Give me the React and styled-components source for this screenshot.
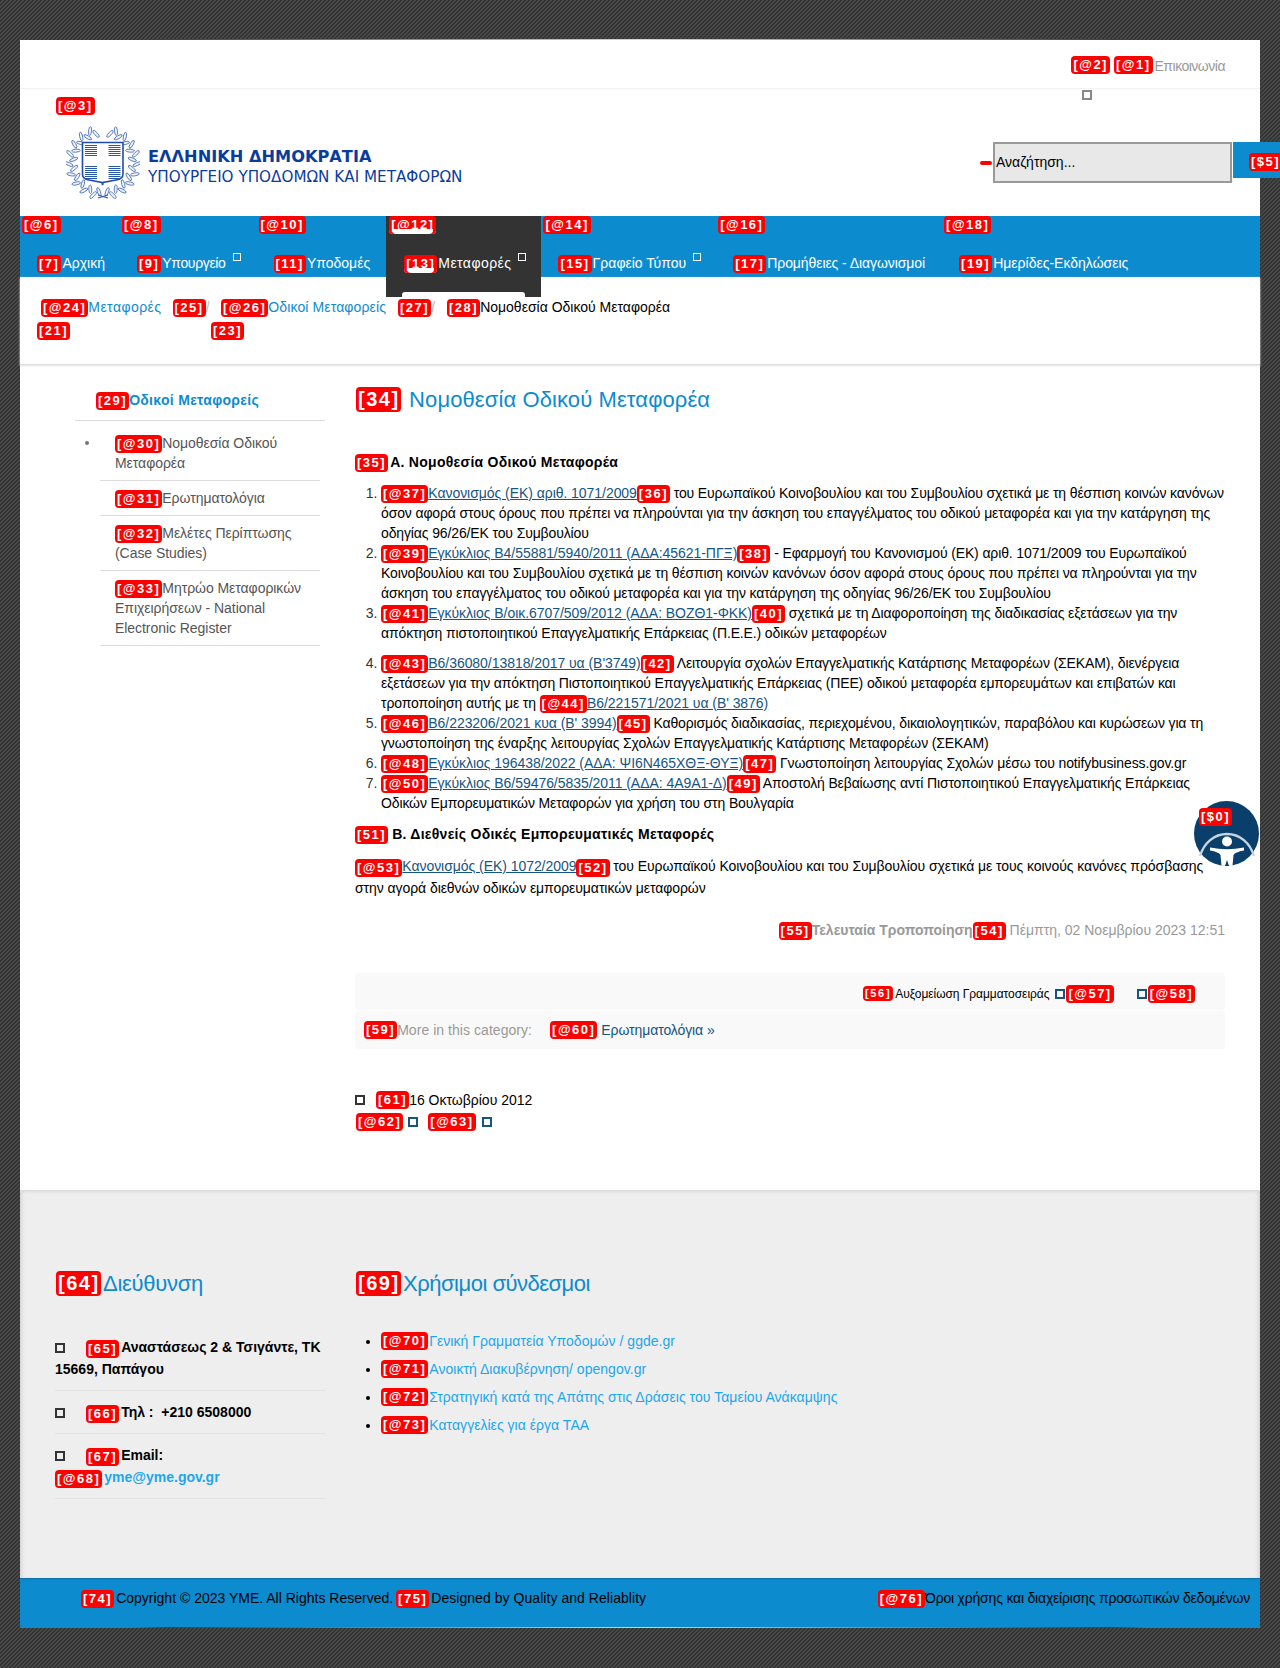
import React from "react";
import styled, { createGlobalStyle, css } from "styled-components";

const FONT = `"Liberation Sans", Arial, sans-serif`;

const Global = createGlobalStyle`
  html, body { margin: 0; padding: 0; }
  body {
    font-family: ${FONT};
    font-size: 14px;
    line-height: 20px;
    color: #000;
    overflow-x: hidden;
    background-color: #3e3e3e;
    background-image: linear-gradient(135deg, #343434 25%, #484848 25%, #484848 50%, #343434 50%, #343434 75%, #484848 75%);
    background-size: 4px 4px;
  }
`;

const Wrapper = styled.div`
  position: relative;
  width: 1240px;
  margin: 40px 20px;
  background: #fff;
  &::before, &::after {
    content: "";
    position: absolute;
    left: 0;
    right: 0;
    height: 1px;
    background: linear-gradient(90deg, transparent 9%, #0d4c86 12%, #cfd6da 50%, #0d4c86 88%, transparent 91%);
  }
  &::before { top: -1px; }
  &::after { bottom: 0; }
`;

const Tag = styled.span`
  position: relative;
  display: inline-block;
  flex: none;
  height: 18px;
  padding: 0 2px;
  border-radius: 4px;
  background: #f00;
  color: #fff;
  font: bold 13px/18px ${FONT};
  letter-spacing: 1.5px;
  vertical-align: bottom;
  text-decoration: none;
  white-space: nowrap;
  ${(p) => p.$size === "large" && css`
    height: 25px;
    padding: 0 1.5px 0 2px;
    font-size: 20px;
    line-height: 25px;
  `}
  ${(p) => p.$size === "small" && css`
    height: 15px;
    font-size: 11px;
    line-height: 15px;
    letter-spacing: 1.7px;
  `}
  ${(p) => p.$patched && css`
    background: linear-gradient(#f00 0 72%, #fff 72% 100%);
    box-shadow: inset 3px 0 #f00, inset -3px 0 #f00;
  `}
`;

const Tofu = styled.span`
  display: inline-block;
  flex: none;
  box-sizing: border-box;
  width: ${(p) => p.$w || 10}px;
  height: ${(p) => p.$w || 10}px;
  border: ${(p) => p.$b || 2}px solid ${(p) => p.$color || "#333"};
`;

/* top bar */
const TopBar = styled.div`
  box-sizing: border-box;
  height: 49px;
  padding: 16px 35px 0 0;
  display: flex;
  justify-content: flex-end;
  gap: 4px;
  border-bottom: 1px solid #f1f1f1;
`;
const TopLink = styled.a`
  margin-left: -2px;
  color: #999;
  letter-spacing: -0.5px;
`;

/* header */
const HeaderRow = styled.header`
  height: 127px;
  display: flex;
  justify-content: space-between;
`;
const Brand = styled.div`
  padding: 8px 0 0 36px;
  display: flex;
  flex-direction: column;
  align-items: flex-start;
`;
const Logo = styled.div`
  margin: 10px 0 0 10px;
  display: flex;
  gap: 8px;
`;
const LogoText = styled.div`
  padding-top: 21px;
  color: #0b3c9c;
  font-family: "DejaVu Sans", sans-serif;
`;
const LogoTitle = styled.div`
  font-size: 16.2px;
  line-height: 21px;
  font-weight: bold;
  white-space: nowrap;
`;
const LogoSub = styled.div`
  font-size: 15.2px;
  line-height: 20px;
  white-space: nowrap;
`;
const HeaderRight = styled.div`
  width: 300px;
  margin-right: -20px;
  display: flex;
  flex-direction: column;
  align-items: flex-start;
`;
const TofuHolder = styled.div`
  height: 10px;
  margin: 1px 0 0 102px;
  display: flex;
`;
const SearchForm = styled.form`
  margin-top: 42px;
  display: flex;
  align-items: flex-start;
`;
const SearchDash = styled.span`
  width: 12px;
  height: 4px;
  margin: 19px 1px 0 0;
  border-radius: 2px;
  background: #f00;
`;
const SearchBox = styled.div`
  box-sizing: border-box;
  width: 239px;
  height: 41px;
  padding-left: 1px;
  border: 2px solid #999;
  background: #e8e8e8;
  color: #000;
  line-height: 37px;
`;
const SearchButton = styled.div`
  box-sizing: border-box;
  width: 47px;
  height: 36px;
  margin-left: 1px;
  padding: 9px 0 0 16px;
  background: #0d8bcf;
  overflow: hidden;
  white-space: nowrap;
`;

/* nav */
const NavBar = styled.nav`
  height: 61px;
  display: flex;
  background: #0d8bcf;
`;
const NavItem = styled.div`
  height: ${(p) => (p.$active ? 81 : 61)}px;
  position: relative;
  display: flex;
  flex-direction: column;
  align-items: flex-start;
  padding: 0 ${(p) => p.$pad}px 0 ${(p) => (p.$active ? 3 : 2)}px;
  ${(p) => p.$active && css`
    background: #333;
    &::after {
      content: "";
      position: absolute;
      left: 16px;
      right: 16px;
      bottom: 0;
      height: 5px;
      border-radius: 3px 3px 0 0;
      background: #fff;
    }
  `}
`;
const NavLink = styled.a`
  margin: 19px 0 0 15px;
  height: 20px;
  display: flex;
  align-items: flex-end;
  color: #fff;
  white-space: nowrap;
`;
const NavLabel = styled.span`
  margin-left: 1px;
  line-height: 20px;
  letter-spacing: ${(p) => p.$ls || 0}px;
`;
const NavTofu = styled(Tofu)`
  align-self: flex-start;
  margin-left: 7px;
`;

/* breadcrumb */
const Crumbs = styled.div`
  box-sizing: border-box;
  height: 88px;
  padding: 20px 0 0 17px;
  display: flex;
  border-bottom: 1px solid #ddd;
  box-shadow: 0 1px 2px #e4e4e4;
`;
const CrumbGroup = styled.div`
  width: ${(p) => p.$w}px;
  flex: none;
`;
const CrumbRow = styled.div`
  height: 23px;
  padding-left: ${(p) => p.$indent || 0}px;
  white-space: nowrap;
`;
const CrumbLink = styled.a`
  color: #0d8bcf;
  letter-spacing: ${(p) => p.$ls || 0}px;
`;
const CrumbSep = styled.span`
  margin-left: ${(p) => p.$gap}px;
  color: #bbb;
`;

/* content */
const Content = styled.div`
  display: flex;
  height: 825px;
`;
const Side = styled.aside`
  width: 250px;
  margin-left: 55px;
  padding-top: 25px;
`;
const SideHead = styled.div`
  padding: 0 0 10px 21px;
  border-bottom: 1px solid #ddd;
  color: #0d8bcf;
  font-weight: bold;
  letter-spacing: 0.3px;
`;
const SideList = styled.ul`
  list-style: none;
  margin: 5px 5px 0 25px;
  padding: 0;
`;
const SideItem = styled.li`
  position: relative;
  padding: 7px 0 7px 15px;
  border-bottom: 1px solid #ddd;
  color: #555;
  ${(p) => p.$first && css`
    &::before {
      content: "";
      position: absolute;
      left: -15px;
      top: 15px;
      width: 4px;
      height: 4px;
      border-radius: 50%;
      background: #777;
    }
  `}
`;
const SideLink = styled.a`
  color: #555;
  letter-spacing: -0.05px;
`;
const Article = styled.main`
  width: 870px;
  margin-left: 30px;
  padding-top: 22px;
`;
const Title = styled.h1`
  margin: 0;
  padding-left: 1px;
  display: flex;
  gap: 8px;
  font-size: 22px;
  font-weight: normal;
  line-height: 25px;
  letter-spacing: 0.1px;
  color: #0d8bcf;
`;
const SubHead = styled.h3`
  margin: ${(p) => p.$top}px 0 0;
  font-size: 14px;
  line-height: 20px;
  font-weight: bold;
  letter-spacing: 0.28px;
  & > span { margin-right: ${(p) => p.$gap || 2}px; }
`;
const Numbered = styled.ol`
  margin: 11px 0 0;
  padding: 0 0 0 26px;
  letter-spacing: -0.13px;
`;
const NumItem = styled.li`
  margin-top: ${(p) => p.$top || 0}px;
  white-space: pre-line;
  &::marker { color: #333; }
`;
const DocLink = styled.a`
  color: #15557f;
  text-decoration: underline;
  letter-spacing: -0.05px;
`;
const Para = styled.p`
  margin: 11px 0 0;
  line-height: 22px;
  letter-spacing: -0.07px;
`;
const Modified = styled.div`
  margin-top: 21px;
  text-align: right;
  color: #999;
`;
const ModLabel = styled.strong`
  font-weight: bold;
  color: #999;
`;
const Strip = styled.div`
  box-sizing: border-box;
  height: ${(p) => p.$h}px;
  margin-top: ${(p) => p.$top}px;
  border-radius: 4px;
  background: #f9f9f9;
  display: flex;
  align-items: center;
  white-space: nowrap;
`;
const FontTools = styled(Strip)`
  justify-content: flex-end;
  padding: 4px 30px 0 0;
  font-size: 12px;
`;
const ToolTofu = styled(Tofu)`
  margin: 0 1px 0 ${(p) => p.$left}px;
`;
const SmallTagGap = styled.span`
  margin-left: 2px;
  letter-spacing: -0.05px;
`;
const PagerStrip = styled(Strip)`
  padding-left: 9px;
  color: #999;
  letter-spacing: 0.05px;
`;
const PagerTag = styled(Tag)`
  margin-left: 18px;
`;
const PagerLink = styled.a`
  margin-left: 4px;
  color: #15557f;
  letter-spacing: -0.1px;
`;
const MetaRow = styled.div`
  height: 20px;
  margin-top: ${(p) => p.$top}px;
  display: flex;
  align-items: center;
  white-space: nowrap;
`;
const MetaTag = styled(Tag)`
  margin-left: ${(p) => p.$left}px;
`;
const MetaTofu = styled(Tofu)`
  margin-left: ${(p) => p.$left}px;
`;

/* footer */
const FooterMain = styled.footer`
  box-sizing: border-box;
  height: 388px;
  padding: 81px 0 0 35px;
  display: flex;
  gap: 30px;
  background: #eee;
  box-shadow: inset 0 3px 3px -1px #dadada, inset 4px 0 4px -3px #ccc, inset -4px 0 4px -3px #ccc;
`;
const FooterCol = styled.section`
  width: ${(p) => p.$w}px;
`;
const FooterHead = styled.h2`
  margin: 0;
  display: flex;
  gap: 2px;
  padding-left: 1px;
  font-size: 22px;
  font-weight: normal;
  line-height: 25px;
  letter-spacing: ${(p) => p.$ls}px;
  color: #0d8bcf;
`;
const Contacts = styled.div`
  margin-top: 30px;
  font-weight: bold;
  line-height: 22px;
`;
const Contact = styled.div`
  padding: 10px 0;
  border-bottom: 1px solid #e2e2e2;
`;
const ContactTofu = styled(Tofu)`
  margin-right: 21px;
  vertical-align: -1px;
`;
const ContactText = styled.span`
  margin-left: 2px;
`;
const MailLink = styled.a`
  margin-left: 2px;
  color: #1ca7ec;
`;
const LinkList = styled.ul`
  margin: 31px 0 0;
  padding: 0 0 0 26px;
  line-height: 28px;
`;
const LinkItem = styled.li`
  & > span { vertical-align: 1px; }
`;
const FootLink = styled.a`
  margin-left: 1px;
  color: #1ca7ec;
  letter-spacing: 0.03px;
`;
const BottomBar = styled.div`
  box-sizing: border-box;
  height: 50px;
  padding: 10px 10px 0 61px;
  display: flex;
  justify-content: space-between;
  background: #0d8bcf;
  box-shadow: inset 0 2px 2px -1px #0a6ea5;
  color: #000;
  white-space: nowrap;
`;
const BarTag = styled(Tag)`
  margin: 0 2px 0 ${(p) => p.$left || 0}px;
`;
const BarText = styled.span`
  letter-spacing: ${(p) => p.$ls || 0}px;
`;

/* accessibility */
const A11yButton = styled.div`
  position: absolute;
  left: 1174px;
  top: 761px;
  width: 65px;
  height: 65px;
`;
const A11yTag = styled(Tag)`
  position: absolute;
  left: 5px;
  top: 7px;
`;

const Emblem = () => {
  const leaves = [];
  const n = 19;
  for (let side = -1; side <= 1; side += 2) {
    for (let k = 0; k < n; k++) {
      const deg = 172 - k * 8.8;
      const a = (side * deg * Math.PI) / 180;
      const r = k % 2 ? 34 : 29.5;
      const x = 37 + r * Math.sin(a);
      const y = 37.5 - r * Math.cos(a);
      const rot = (a * 180) / Math.PI + side * (k % 2 ? 62 : 118);
      leaves.push(
        <ellipse key={`${side}-${k}`} cx={x} cy={y} rx="4.4" ry="1.5" transform={`rotate(${rot} ${x} ${y})`} fill="#eef2fa" stroke="#2a58a8" strokeWidth="0.7" />
      );
    }
  }
  const stripes = (x, y, n, w) =>
    Array.from({ length: n }, (_, i) => (
      <rect key={`${x}-${y}-${i}`} x={x} y={y + i * 2} width={w} height="1" fill="#2a58a8" />
    ));
  return (
    <svg width="74" height="75" viewBox="0 0 74 75">
      {leaves}
      <path d="M32 70L42 73M42 70L32 73" stroke="#2a58a8" strokeWidth="1.2" />
      <path d="M16.5 17.5H57V49Q57 54 50 55L37 57.5 36.6 60 36 57.5 23 55Q16.5 54 16.5 49Z" fill="#fff" stroke="#1e4da8" strokeWidth="1.6" />
      {stripes(19, 20, 6, 12)}
      {stripes(42.5, 20, 6, 12)}
      {stripes(19, 41, 7, 12)}
      {stripes(42.5, 41, 7, 12)}
    </svg>
  );
};

const A11yIcon = () => (
  <svg width="65" height="65" viewBox="0 0 65 65">
    <circle cx="32.5" cy="32.5" r="32.5" fill="#0b3f6b" />
    <path d="M6 55C10 42 20 33 33 33S56 42 60 55" fill="none" stroke="#c4d4e0" strokeWidth="2.4" />
    <circle cx="33" cy="40.5" r="5" fill="#fff" />
    <path d="M16 46.5Q33 50 50 46.5V49.5Q41 51 39.5 54L38.5 64.7H27.5L26.5 54Q25 51 16 49.5Z" fill="#fff" />
    <path d="M33 59L35 65H31Z" fill="#0b3f6b" />
  </svg>
);

const navItems = [
  { top: "[@6]", tag: "[7]", text: "Αρχική", pad: 15 },
  { top: "[@8]", tag: "[9]", text: "Υπουργείο", tofu: true, pad: 16, ls: -0.35 },
  { top: "[@10]", tag: "[11]", text: "Υποδομές", pad: 16 },
  { top: "[@12]", tag: "[13]", text: "Μεταφορές", tofu: true, active: true, pad: 15, ls: 0.45 },
  { top: "[@14]", tag: "[15]", text: "Γραφείο Τύπου", tofu: true, pad: 15 },
  { top: "[@16]", tag: "[17]", text: "Προμήθειες - Διαγωνισμοί", pad: 17, ls: -0.08 },
  { top: "[@18]", tag: "[19]", text: "Ημερίδες-Εκδηλώσεις", pad: 17 },
];

const sideItems = [
  { tag: "[@30]", text: "Νομοθεσία Οδικού Μεταφορέα", first: true },
  { tag: "[@31]", text: "Ερωτηματολόγια" },
  { tag: "[@32]", text: "Μελέτες Περίπτωσης (Case Studies)" },
  { tag: "[@33]", text: "Μητρώο Μεταφορικών Επιχειρήσεων - National Electronic Register" },
];

const laws = [
  { a: "[@37]", link: "Κανονισμός (ΕΚ) αριθ. 1071/2009", b: "[36]", text: " του Ευρωπαϊκού Κοινοβουλίου και του Συμβουλίου σχετικά με τη θέσπιση κοινών κανόνων\nόσον αφορά στους όρους που πρέπει να πληρούνται για την άσκηση του επαγγέλματος του οδικού μεταφορέα και για την κατάργηση της\nοδηγίας 96/26/ΕΚ του Συμβουλίου" },
  { a: "[@39]", link: "Εγκύκλιος Β4/55881/5940/2011 (ΑΔΑ:45621-ΠΓΞ)", b: "[38]", text: " - Εφαρμογή του Κανονισμού (ΕΚ) αριθ. 1071/2009 του Ευρωπαϊκού\nΚοινοβουλίου και του Συμβουλίου σχετικά με τη θέσπιση κοινών κανόνων όσον αφορά στους όρους που πρέπει να πληρούνται για την\nάσκηση του επαγγέλματος του οδικού μεταφορέα και για την κατάργηση της οδηγίας 96/26/ΕΚ του Συμβουλίου" },
  { a: "[@41]", link: "Εγκύκλιος Β/οικ.6707/509/2012 (ΑΔΑ: ΒΟΖΘ1-ΦΚΚ)", b: "[40]", text: " σχετικά με τη Διαφοροποίηση της διαδικασίας εξετάσεων για την\nαπόκτηση πιστοποιητικού Επαγγελματικής Επάρκειας (Π.Ε.Ε.) οδικών μεταφορέων" },
  { a: "[@43]", top: 10, link: "Β6/36080/13818/2017 υα (Β'3749)", b: "[42]", text: " Λειτουργία σχολών Επαγγελματικής Κατάρτισης Μεταφορέων (ΣΕΚΑΜ), διενέργεια\nεξετάσεων για την απόκτηση Πιστοποιητικού Επαγγελματικής Επάρκειας (ΠΕΕ) οδικού μεταφορέα εμπορευμάτων και επιβατών και\nτροποποίηση αυτής με τη ", c: "[@44]", link2: "Β6/221571/2021 υα (Β' 3876)" },
  { a: "[@46]", link: "Β6/223206/2021 κυα (Β' 3994)", b: "[45]", text: " Καθορισμός διαδικασίας, περιεχομένου, δικαιολογητικών, παραβόλου και κυρώσεων για τη\nγνωστοποίηση της έναρξης λειτουργίας Σχολών Επαγγελματικής Κατάρτισης Μεταφορέων (ΣΕΚΑΜ)" },
  { a: "[@48]", link: "Εγκύκλιος 196438/2022 (ΑΔΑ: ΨΙ6Ν465ΧΘΞ-ΘΥΞ)", b: "[47]", text: " Γνωστοποίηση λειτουργίας Σχολών μέσω του notifybusiness.gov.gr" },
  { a: "[@50]", link: "Εγκύκλιος Β6/59476/5835/2011 (ΑΔΑ: 4Α9Α1-Δ)", b: "[49]", text: " Αποστολή Βεβαίωσης αντί Πιστοποιητικού Επαγγελματικής Επάρκειας\nΟδικών Εμπορευματικών Μεταφορών για χρήση του στη Βουλγαρία" },
];

const usefulLinks = [
  ["[@70]", "Γενική Γραμματεία Υποδομών / ggde.gr"],
  ["[@71]", "Ανοικτή Διακυβέρνηση/ opengov.gr"],
  ["[@72]", "Στρατηγική κατά της Απάτης στις Δράσεις του Ταμείου Ανάκαμψης"],
  ["[@73]", "Καταγγελίες για έργα ΤΑΑ"],
];

export default function App() {
  return (
    <>
      <Global />
      <Wrapper>
        <TopBar>
          <Tag>[@2]</Tag>
          <Tag>[@1]</Tag>
          <TopLink>Επικοινωνία</TopLink>
        </TopBar>

        <HeaderRow>
          <Brand>
            <Tag>[@3]</Tag>
            <Logo>
              <Emblem />
              <LogoText>
                <LogoTitle>ΕΛΛΗΝΙΚΗ ΔΗΜΟΚΡΑΤΙΑ</LogoTitle>
                <LogoSub>ΥΠΟΥΡΓΕΙΟ ΥΠΟΔΟΜΩΝ ΚΑΙ ΜΕΤΑΦΟΡΩΝ</LogoSub>
              </LogoText>
            </Logo>
          </Brand>
          <HeaderRight>
            <TofuHolder>
              <Tofu $color="#888" />
            </TofuHolder>
            <SearchForm>
              <SearchDash />
              <SearchBox>Αναζήτηση...</SearchBox>
              <SearchButton><Tag>[$5]</Tag></SearchButton>
            </SearchForm>
          </HeaderRight>
        </HeaderRow>

        <NavBar>
          {navItems.map((n) => (
            <NavItem key={n.top} $active={n.active} $pad={n.pad}>
              <Tag $patched={n.active}>{n.top}</Tag>
              <NavLink>
                <Tag $patched={n.active}>{n.tag}</Tag>
                <NavLabel $ls={n.ls}>{n.text}</NavLabel>
                {n.tofu && <NavTofu $color="#fff" $w={8} $b={1.5} />}
              </NavLink>
            </NavItem>
          ))}
        </NavBar>

        <Crumbs>
          <CrumbGroup $w={174}>
            <CrumbRow $indent={4}>
              <Tag>[@24]</Tag><CrumbLink $ls={0.45}>Μεταφορές</CrumbLink>
              <CrumbSep $gap={11}><Tag>[25]</Tag>/</CrumbSep>
            </CrumbRow>
            <CrumbRow><Tag>[21]</Tag></CrumbRow>
          </CrumbGroup>
          <CrumbGroup $w={236}>
            <CrumbRow $indent={10}>
              <Tag>[@26]</Tag><CrumbLink $ls={0.12}>Οδικοί Μεταφορείς</CrumbLink>
              <CrumbSep $gap={12}><Tag>[27]</Tag>/</CrumbSep>
            </CrumbRow>
            <CrumbRow><Tag>[23]</Tag></CrumbRow>
          </CrumbGroup>
          <CrumbGroup $w={300}>
            <CrumbRow><Tag>[28]</Tag>Νομοθεσία Οδικού Μεταφορέα</CrumbRow>
          </CrumbGroup>
        </Crumbs>

        <Content>
          <Side>
            <SideHead><Tag>[29]</Tag>Οδικοί Μεταφορείς</SideHead>
            <SideList>
              {sideItems.map((s) => (
                <SideItem key={s.tag} $first={s.first}>
                  <Tag>{s.tag}</Tag><SideLink>{s.text}</SideLink>
                </SideItem>
              ))}
            </SideList>
          </Side>

          <Article>
            <Title><Tag $size="large">[34]</Tag>Νομοθεσία Οδικού Μεταφορέα</Title>
            <SubHead $top={40}><Tag>[35]</Tag>Α. Νομοθεσία Οδικού Μεταφορέα</SubHead>
            <Numbered>
              {laws.map((l) => (
                <NumItem key={l.a} $top={l.top}>
                  <Tag>{l.a}</Tag><DocLink>{l.link}</DocLink><Tag>{l.b}</Tag>{l.text}
                  {l.c && <Tag>{l.c}</Tag>}
                  {l.link2 && <DocLink>{l.link2}</DocLink>}
                </NumItem>
              ))}
            </Numbered>
            <SubHead $top={11} $gap={4}><Tag>[51]</Tag>Β. Διεθνείς Οδικές Εμπορευματικές Μεταφορές</SubHead>
            <Para>
              <Tag>[@53]</Tag><DocLink>Κανονισμός (ΕΚ) 1072/2009</DocLink><Tag>[52]</Tag> του Ευρωπαϊκού Κοινοβουλίου και του Συμβουλίου σχετικά με τους κοινούς κανόνες πρόσβασης στην αγορά διεθνών οδικών εμπορευματικών μεταφορών
            </Para>
            <Modified>
              <Tag>[55]</Tag><ModLabel>Τελευταία Τροποποίηση</ModLabel><Tag>[54]</Tag> Πέμπτη, 02 Νοεμβρίου 2023 12:51
            </Modified>
            <FontTools $h={37} $top={33}>
              <Tag $size="small">[56]</Tag><SmallTagGap>Αυξομείωση Γραμματοσειράς</SmallTagGap>
              <ToolTofu $left={6} $color="#15557f" />
              <Tag>[@57]</Tag>
              <ToolTofu $left={23} $color="#15557f" />
              <Tag>[@58]</Tag>
            </FontTools>
            <PagerStrip $h={38} $top={1}>
              <Tag>[59]</Tag>More in this category:
              <PagerTag>[@60]</PagerTag>
              <PagerLink>Ερωτηματολόγια »</PagerLink>
            </PagerStrip>
            <MetaRow $top={41}>
              <Tofu />
              <MetaTag $left={11}>[61]</MetaTag>16 Οκτωβρίου 2012
            </MetaRow>
            <MetaRow $top={2}>
              <MetaTag $left={1}>[@62]</MetaTag>
              <MetaTofu $left={5} $color="#15557f" />
              <MetaTag $left={10}>[@63]</MetaTag>
              <MetaTofu $left={6} $color="#15557f" />
            </MetaRow>
          </Article>
        </Content>

        <FooterMain>
          <FooterCol $w={270}>
            <FooterHead $ls={-0.3}><Tag $size="large">[64]</Tag>Διεύθυνση</FooterHead>
            <Contacts>
              <Contact><ContactTofu /><Tag>[65]</Tag><ContactText>Αναστάσεως 2 &amp; Τσιγάντε, ΤΚ 15669, Παπάγου</ContactText></Contact>
              <Contact><ContactTofu /><Tag>[66]</Tag><ContactText>Τηλ :&nbsp; +210 6508000</ContactText></Contact>
              <Contact><ContactTofu /><Tag>[67]</Tag><ContactText>Email:</ContactText><br /><Tag>[@68]</Tag><MailLink>yme@yme.gov.gr</MailLink></Contact>
            </Contacts>
          </FooterCol>
          <FooterCol $w={870}>
            <FooterHead $ls={-0.5}><Tag $size="large">[69]</Tag>Χρήσιμοι σύνδεσμοι</FooterHead>
            <LinkList>
              {usefulLinks.map(([t, l]) => (
                <LinkItem key={t}><Tag>{t}</Tag><FootLink>{l}</FootLink></LinkItem>
              ))}
            </LinkList>
          </FooterCol>
        </FooterMain>

        <BottomBar>
          <div><BarTag>[74]</BarTag><BarText>Copyright © 2023 YME. All Rights Reserved.</BarText><BarTag $left={3}>[75]</BarTag><BarText $ls={0.05}>Designed by Quality and Reliablity</BarText></div>
          <div><Tag>[@76]</Tag><BarText $ls={-0.2}>Όροι χρήσης και διαχείρισης προσωπικών δεδομένων</BarText></div>
        </BottomBar>

        <A11yButton>
          <A11yIcon />
          <A11yTag>[$0]</A11yTag>
        </A11yButton>
      </Wrapper>
    </>
  );
}
